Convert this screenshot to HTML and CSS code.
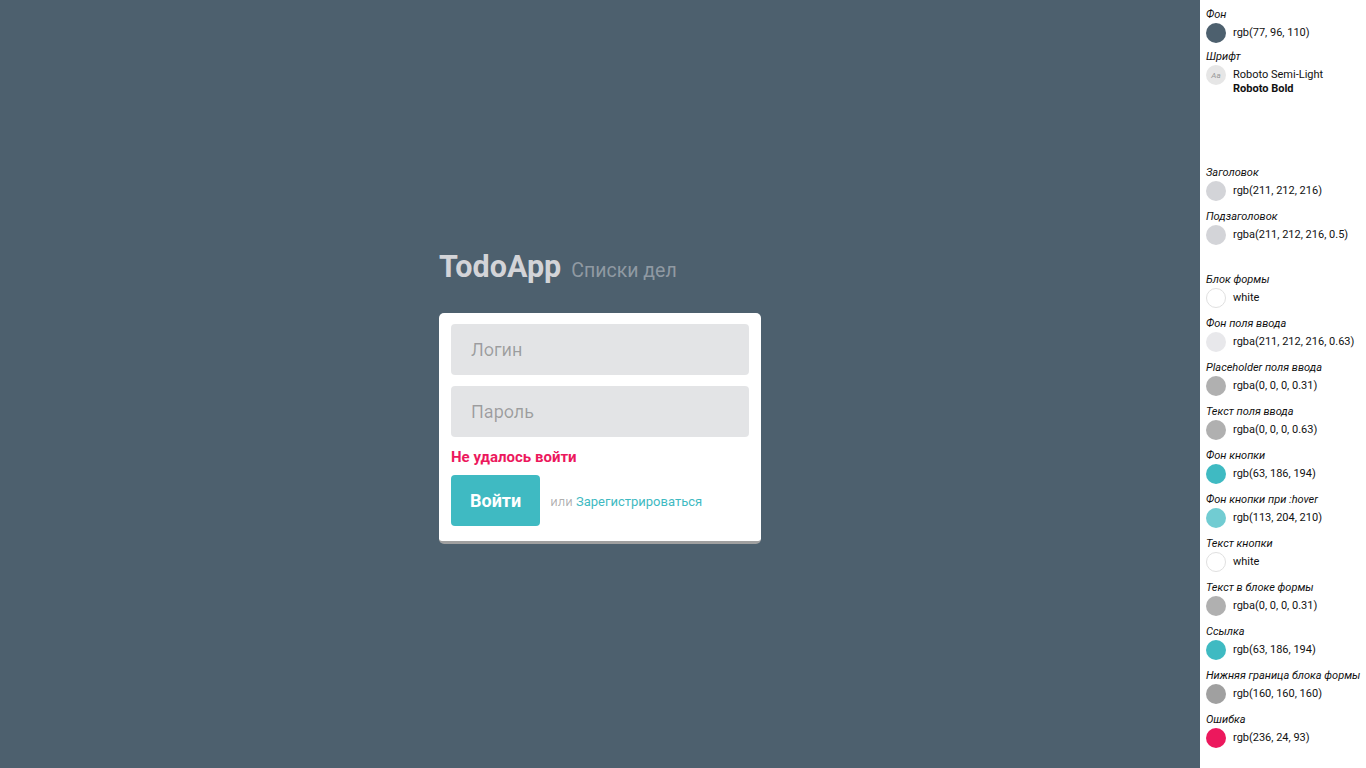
FILE: index.html
```html
<!DOCTYPE html>
<html lang="ru">
<head>
<meta charset="utf-8">
<title>TodoApp</title>
<link rel="stylesheet" href="styles.css">
</head>
<body>
<div class="page">
  <main class="main">
    <div class="login">
      <header class="header">
        <h1 class="title">TodoApp</h1>
        <span class="subtitle">Списки дел</span>
      </header>
      <form class="card">
        <input class="field" type="text" placeholder="Логин">
        <input class="field" type="password" placeholder="Пароль">
        <div class="error">Не удалось войти</div>
        <div class="actions">
          <button class="btn" type="button">Войти</button>
          <span class="or">или <a class="link" href="#">Зарегистрироваться</a></span>
        </div>
      </form>
    </div>
  </main>
  <aside class="palette">
    <div class="group first">
      <div class="label">Фон</div>
      <div class="row"><span class="dot c-bg"></span><span class="val">rgb(77, 96, 110)</span></div>
    </div>
    <div class="group">
      <div class="label">Шрифт</div>
      <div class="row font-row"><span class="dot c-font">Aa</span><span class="val fonts"><span>Roboto Semi-Light</span><b>Roboto Bold</b></span></div>
    </div>
    <div class="group gap-title">
      <div class="label">Заголовок</div>
      <div class="row"><span class="dot c-title"></span><span class="val">rgb(211, 212, 216)</span></div>
    </div>
    <div class="group">
      <div class="label">Подзаголовок</div>
      <div class="row"><span class="dot c-title"></span><span class="val">rgba(211, 212, 216, 0.5)</span></div>
    </div>
    <div class="group gap-form">
      <div class="label">Блок формы</div>
      <div class="row"><span class="dot c-white"></span><span class="val">white</span></div>
    </div>
    <div class="group">
      <div class="label">Фон поля ввода</div>
      <div class="row"><span class="dot c-input"></span><span class="val">rgba(211, 212, 216, 0.63)</span></div>
    </div>
    <div class="group">
      <div class="label">Placeholder поля ввода</div>
      <div class="row"><span class="dot c-gray"></span><span class="val">rgba(0, 0, 0, 0.31)</span></div>
    </div>
    <div class="group">
      <div class="label">Текст поля ввода</div>
      <div class="row"><span class="dot c-gray"></span><span class="val">rgba(0, 0, 0, 0.63)</span></div>
    </div>
    <div class="group">
      <div class="label">Фон кнопки</div>
      <div class="row"><span class="dot c-teal"></span><span class="val">rgb(63, 186, 194)</span></div>
    </div>
    <div class="group">
      <div class="label">Фон кнопки при :hover</div>
      <div class="row"><span class="dot c-teal-light"></span><span class="val">rgb(113, 204, 210)</span></div>
    </div>
    <div class="group">
      <div class="label">Текст кнопки</div>
      <div class="row"><span class="dot c-white"></span><span class="val">white</span></div>
    </div>
    <div class="group">
      <div class="label">Текст в блоке формы</div>
      <div class="row"><span class="dot c-gray"></span><span class="val">rgba(0, 0, 0, 0.31)</span></div>
    </div>
    <div class="group">
      <div class="label">Ссылка</div>
      <div class="row"><span class="dot c-teal"></span><span class="val">rgb(63, 186, 194)</span></div>
    </div>
    <div class="group">
      <div class="label">Нижняя граница блока формы</div>
      <div class="row"><span class="dot c-border"></span><span class="val">rgb(160, 160, 160)</span></div>
    </div>
    <div class="group">
      <div class="label">Ошибка</div>
      <div class="row"><span class="dot c-error"></span><span class="val">rgb(236, 24, 93)</span></div>
    </div>
  </aside>
</div>
</body>
</html>
```

FILE: styles.css
```css
* { box-sizing: border-box; }
html, body { margin: 0; padding: 0; height: 100%; }
body {
  font-family: Roboto, "Noto Sans", "Liberation Sans", sans-serif;
  background: #4d606e;
  overflow: hidden;
}
.page {
  display: flex;
  height: 768px;
}
.main {
  flex: 1;
  background: rgb(77, 96, 110);
  display: flex;
  justify-content: center;
  padding-top: 246px;
}
.login {
  width: 322px;
}
.header {
  display: flex;
  align-items: baseline;
  gap: 10px;
  height: 67px;
}
.title {
  margin: 0;
  font-size: 30.5px;
  line-height: 42px;
  font-weight: 700;
  color: rgb(211, 212, 216);
}
.subtitle {
  font-size: 19.5px;
  font-weight: 400;
  color: rgba(211, 212, 216, 0.5);
}
.card {
  margin: 0;
  background: #fff;
  border-radius: 5px;
  border-bottom: 3px solid rgb(160, 160, 160);
  padding: 11px 12px 15px;
  display: flex;
  flex-direction: column;
}
.field {
  display: block;
  width: 100%;
  height: 51px;
  border: none;
  border-radius: 4px;
  background: rgba(211, 212, 216, 0.63);
  padding: 0 20px;
  font-family: inherit;
  font-size: 18px;
  color: rgba(0, 0, 0, 0.63);
  outline: none;
  margin-bottom: 11px;
}
.field::placeholder { color: rgba(0, 0, 0, 0.31); }
.error {
  color: rgb(236, 24, 93);
  font-weight: 700;
  font-size: 15px;
  line-height: 18px;
  margin-bottom: 9px;
}
.actions {
  display: flex;
  align-items: center;
  gap: 10px;
}
.btn {
  height: 51px;
  padding: 0 19px;
  border: none;
  border-radius: 4px;
  background: rgb(63, 186, 194);
  color: #fff;
  font-family: inherit;
  font-size: 18px;
  font-weight: 700;
  cursor: pointer;
}
.btn:hover { background: rgb(113, 204, 210); }
.or {
  font-size: 13px;
  color: rgba(0, 0, 0, 0.31);
  padding-top: 2px;
}
.link {
  color: rgb(63, 186, 194);
  text-decoration: none;
}

.palette {
  width: 166px;
  background: #fff;
  padding: 8px 0 0 6px;
}
.group { margin-bottom: 9px; }
.group.first { margin-bottom: 7px; }
.label {
  font-size: 11px;
  line-height: 14px;
  font-style: italic;
  color: #111;
}
.row {
  display: flex;
  align-items: center;
  gap: 7px;
  margin-top: 1px;
  height: 20px;
}
.dot {
  width: 20px;
  height: 20px;
  border-radius: 50%;
  flex: none;
  display: inline-flex;
  align-items: center;
  justify-content: center;
}
.val {
  font-size: 11px;
  line-height: 14px;
  color: #111;
}
.font-row {
  align-items: flex-start;
  height: 30px;
}
.fonts {
  display: flex;
  flex-direction: column;
  padding-top: 3px;
}
.fonts b { font-weight: 700; }
.c-font {
  background: #e6e6e6;
  color: #999;
  font-size: 8px;
  font-style: italic;
}
.c-bg { background: rgb(77, 96, 110); }
.c-title { background: rgb(211, 212, 216); }
.c-white { background: #fff; border: 1px solid #e0e0e0; }
.c-input { background: rgb(232, 232, 235); }
.c-gray { background: #b0b0b0; }
.c-teal { background: rgb(63, 186, 194); }
.c-teal-light { background: rgb(113, 204, 210); }
.c-border { background: rgb(160, 160, 160); }
.c-error { background: rgb(236, 24, 93); }
.gap-title { margin-top: 71px; }
.gap-form { margin-top: 28px; }
```
